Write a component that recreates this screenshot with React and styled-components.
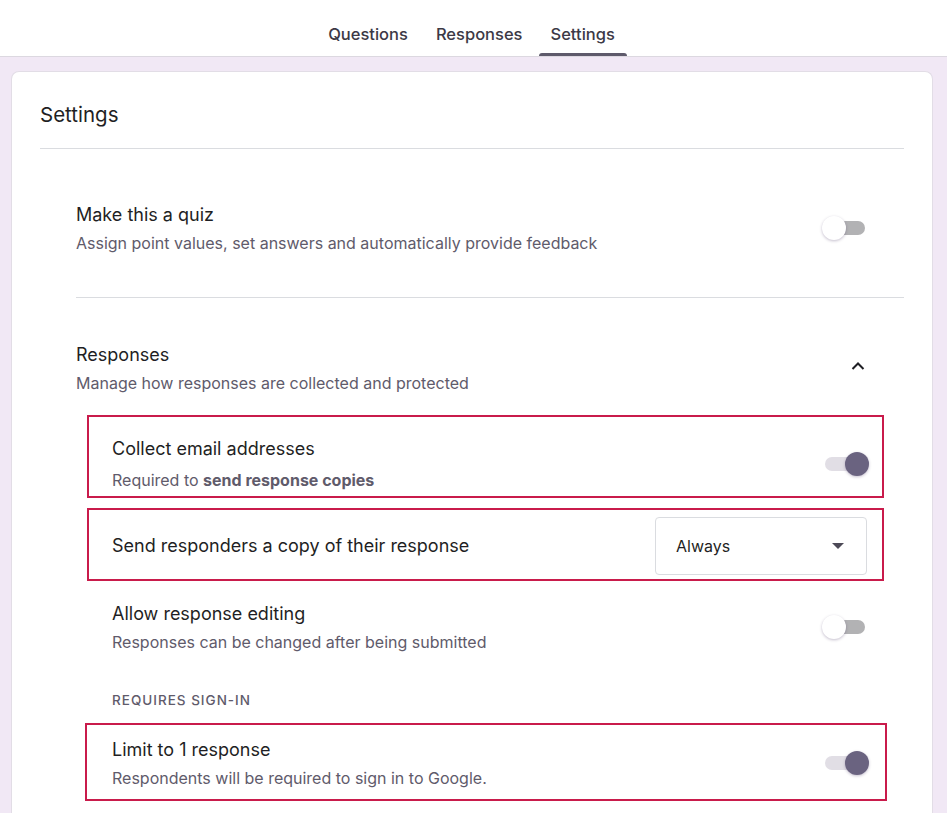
import React from 'react';
import styled, { createGlobalStyle } from 'styled-components';

const Global = createGlobalStyle`
    body {
        margin: 0;
        background: #f1e8f5;
        font-family: Inter, Roboto, "Liberation Sans", sans-serif;
        color: #1f1f24;
    }
`;

const Header = styled.header`
    height: 56px;
    background: #fff;
    border-bottom: 1px solid #dcd8e0;
    display: flex;
    justify-content: center;
    align-items: stretch;
    gap: 4px;
    padding-right: 4px;
`;

const Tab = styled.div`
    position: relative;
    padding: 12px 12px 0;
    display: flex;
    align-items: center;
    font-size: 16.5px;
    font-weight: 500;
    color: #3c3946;
    &::after {
        content: '';
        display: ${p => (p.$active ? 'block' : 'none')};
        position: absolute;
        left: 0;
        right: 0;
        bottom: 0;
        height: 3px;
        border-radius: 3px 3px 0 0;
        background: #5e5a6b;
    }
`;

const Main = styled.main`
    padding: 14px 14px 0 11px;
`;

const Card = styled.section`
    background: #fff;
    border: 1px solid #e2dde6;
    border-bottom: none;
    border-radius: 8px 8px 0 0;
    padding: 0 28px;
    min-height: 760px;
`;

const CardTitle = styled.h1`
    margin: 0;
    padding: 29px 0 19px;
    font-size: 20.5px;
    line-height: 28px;
    font-weight: 400;
    border-bottom: 1px solid #dadce0;
`;

const Section = styled.div`
    margin-left: 36px;
    padding: ${p => p.$pad};
    border-bottom: ${p => (p.$divider ? '1px solid #dadce0' : 'none')};
`;

const Line = styled.div`
    display: flex;
    align-items: center;
    justify-content: space-between;
    padding-right: 37px;
`;

const Title = styled.div`
    font-size: 18px;
    line-height: 24px;
    color: #1f1f24;
`;

const Sub = styled.div`
    font-size: 16px;
    line-height: 20px;
    color: #5f5b6b;
    margin-top: ${p => p.$gap || 6}px;
    b {
        font-weight: 700;
    }
`;

const Row = styled.div`
    margin: ${p => (p.$wide ? '0 17px 0 9px' : '0 20px 0 11px')};
    padding: ${p => p.$pad};
    border: 2px solid ${p => (p.$mark ? '#c91b4b' : 'transparent')};
    display: flex;
    align-items: center;
    justify-content: space-between;
`;

const Label = styled.div`
    margin: 30px 0 13px 36px;
    font-size: 13.5px;
    line-height: 20px;
    font-weight: 500;
    letter-spacing: 1px;
    color: #5f5b6b;
`;

const Gap = styled.div`
    height: ${p => p.$h}px;
`;

const Track = styled.div`
    position: relative;
    width: 40px;
    height: 14px;
    border-radius: 7px;
    background: ${p => (p.$on ? '#e1dee5' : '#b2b2b4')};
    margin-right: 2px;
    &::after {
        content: '';
        position: absolute;
        top: -5px;
        left: ${p => (p.$on ? '20px' : '-3px')};
        width: 24px;
        height: 24px;
        border-radius: 50%;
        background: ${p => (p.$on ? '#6a6380' : '#fff')};
        box-shadow: 0 1px 3px rgba(60, 40, 90, 0.3);
    }
`;

const Select = styled.div`
    width: 212px;
    height: 58px;
    box-sizing: border-box;
    border: 1px solid #dadce0;
    border-radius: 4px;
    display: flex;
    align-items: center;
    justify-content: space-between;
    padding: 0 22px 0 20px;
    font-size: 16px;
    color: #1f1f24;
`;

const Caret = styled.span`
    width: 0;
    height: 0;
    border-left: 6px solid transparent;
    border-right: 6px solid transparent;
    border-top: 6px solid #4d4a57;
`;

const Chevron = () => (
    <svg width="24" height="24" viewBox="0 0 24 24" style={{ marginRight: -3, marginTop: -4 }}>
        <path d="M6.5 15l5.5-5.5 5.5 5.5" fill="none" stroke="#1f1f24" strokeWidth="2" />
    </svg>
);

const Toggle = ({ on }) => <Track $on={on} />;

export default function App() {
    return (
        <>
            <Global />
            <Header>
                <Tab>Questions</Tab>
                <Tab>Responses</Tab>
                <Tab $active>Settings</Tab>
            </Header>
            <Main>
                <Card>
                    <CardTitle>Settings</CardTitle>

                    <Section $divider $pad="54px 0 44px">
                        <Line>
                            <div>
                                <Title>Make this a quiz</Title>
                                <Sub>Assign point values, set answers and automatically provide feedback</Sub>
                            </div>
                            <Toggle />
                        </Line>
                    </Section>

                    <Section $pad="45px 0 0">
                        <Line>
                            <div>
                                <Title>Responses</Title>
                                <Sub>Manage how responses are collected and protected</Sub>
                            </div>
                            <Chevron />
                        </Line>

                        <Gap $h={22} />

                        <Row $mark $pad="20px 15px 6px 23px">
                            <div>
                                <Title>Collect email addresses</Title>
                                <Sub $gap={9}>Required to <b>send response copies</b></Sub>
                            </div>
                            <Toggle on />
                        </Row>

                        <Gap $h={10} />

                        <Row $mark $pad="7px 15px 4px 23px">
                            <Title>Send responders a copy of their response</Title>
                            <Select>
                                Always
                                <Caret />
                            </Select>
                        </Row>

                        <Row $pad="19px 15px 6px 23px">
                            <div>
                                <Title>Allow response editing</Title>
                                <Sub>Responses can be changed after being submitted</Sub>
                            </div>
                            <Toggle />
                        </Row>

                        <Label>REQUIRES SIGN-IN</Label>

                        <Row $mark $wide $pad="13px 18px 11px 25px">
                            <div>
                                <Title>Limit to 1 response</Title>
                                <Sub $gap={6}>Respondents will be required to sign in to Google.</Sub>
                            </div>
                            <Toggle on />
                        </Row>
                    </Section>
                </Card>
            </Main>
        </>
    );
}
